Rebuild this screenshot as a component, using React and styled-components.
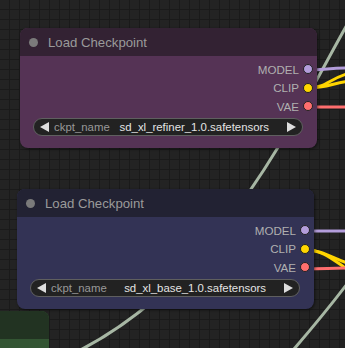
import React from 'react';
import styled, { createGlobalStyle } from 'styled-components';

const GlobalStyle = createGlobalStyle`
  html, body {
    margin: 0;
    padding: 0;
    background: #222;
  }
  body {
    font-family: "Liberation Sans", Arial, sans-serif;
  }
`;

const colors = {
  purple: { title: '#332233', body: '#553355' },
  blue: { title: '#222233', body: '#333355' },
  green: { title: '#223322', body: '#335533' },
};

const slotColors = {
  MODEL: '#b39ddb',
  CLIP: '#ffd500',
  VAE: '#ff6e6e',
};

const Canvas = styled.div`
  position: relative;
  width: 345px;
  height: 348px;
  overflow: hidden;
  background-color: #232323;
  background-image:
    linear-gradient(to right, #1a1a1a 1px, transparent 1px),
    linear-gradient(to bottom, #1a1a1a 1px, transparent 1px);
  background-size: 10px 10px;
  background-position: 9px 9px;
`;

const Links = styled.svg`
  position: absolute;
  inset: 0;
  width: 345px;
  height: 348px;
`;

const Node = styled.div`
  position: absolute;
  left: ${p => p.$x}px;
  top: ${p => p.$y}px;
  width: ${p => p.$w}px;
  height: ${p => p.$h}px;
  display: flex;
  flex-direction: column;
  background: ${p => colors[p.$color].body};
  border-radius: 8px;
  overflow: hidden;
  box-shadow: 1px 1px 3px rgba(0, 0, 0, 0.5);
`;

const TitleBar = styled.div`
  height: 28px;
  flex: none;
  display: flex;
  align-items: center;
  gap: 10px;
  padding-left: 9px;
  background: ${p => colors[p.$color].title};
  color: #9a9a9a;
  font-size: 13.2px;
`;

const TitleDot = styled.span`
  width: 9px;
  height: 9px;
  border-radius: 50%;
  background: #7a7a7a;
`;

const Outputs = styled.div`
  display: flex;
  flex-direction: column;
  padding-top: 4px;
`;

const OutputRow = styled.div`
  height: 18.5px;
  display: flex;
  align-items: center;
  justify-content: flex-end;
  gap: 4px;
  padding-right: 4px;
  color: #b0b0b0;
  font-size: 11.6px;
`;

const SlotDot = styled.span`
  width: 10px;
  height: 10px;
  box-sizing: border-box;
  border-radius: 50%;
  background: ${p => p.$color};
  border: 1.5px solid #222;
`;

const Combo = styled.div`
  margin: 2px 14px 0 13px;
  height: 18.5px;
  box-sizing: border-box;
  display: flex;
  align-items: center;
  padding: 0 6px;
  gap: 4px;
  background: #222;
  border: 1px solid #5f5f5f;
  border-radius: 10px;
  font-size: 11.4px;
`;

const ComboLabel = styled.span`
  color: #999;
  margin-left: 1px;
`;

const ComboValue = styled.span`
  flex: 1;
  text-align: right;
  color: #e4e4e4;
  padding-right: 14px;
  white-space: nowrap;
`;

const Arrow = ({ dir }) => (
  <svg width="9" height="10" viewBox="0 0 9 10">
    {dir === 'left' ? (
      <polygon points="9,0 9,10 0,5" fill="#ddd" />
    ) : (
      <polygon points="0,0 0,10 9,5" fill="#ddd" />
    )}
  </svg>
);

function CheckpointNode({ x, y, color, file }) {
  return (
    <Node $x={x} $y={y} $w={297} $h={120} $color={color}>
      <TitleBar $color={color}>
        <TitleDot />
        Load Checkpoint
      </TitleBar>
      <Outputs>
        {['MODEL', 'CLIP', 'VAE'].map(name => (
          <OutputRow key={name}>
            {name}
            <SlotDot $color={slotColors[name]} />
          </OutputRow>
        ))}
      </Outputs>
      <Combo>
        <Arrow dir="left" />
        <ComboLabel>ckpt_name</ComboLabel>
        <ComboValue>{file}</ComboValue>
        <Arrow dir="right" />
      </Combo>
    </Node>
  );
}

const GreenNode = styled(Node)`
  box-shadow: none;
`;

export default function App() {
  return (
    <>
      <GlobalStyle />
      <Canvas>
        <Links viewBox="0 0 345 348">
          <g fill="none" strokeWidth="3" strokeLinecap="round">
            <path d="M352 16 C 292 120, 215 300, 45 366" stroke="#a7b7a4" />
            <path d="M350 280 Q 326 312, 288 356" stroke="#a7b7a4" />
            <path d="M308 70 C 325 70, 330 68, 350 68" stroke={slotColors.MODEL} />
            <path d="M308 88 C 326 88, 330 78, 350 73" stroke={slotColors.CLIP} />
            <path d="M308 88 C 326 88, 334 83, 350 81" stroke={slotColors.CLIP} />
            <path d="M308 107 L 350 107" stroke={slotColors.VAE} />
            <path d="M306 231 L 350 231" stroke={slotColors.MODEL} />
            <path d="M306 250 C 322 250, 330 257, 350 264" stroke={slotColors.CLIP} />
            <path d="M306 250 C 324 250, 334 261, 350 271" stroke={slotColors.CLIP} />
            <path d="M306 269 C 325 269, 330 268, 350 268" stroke={slotColors.VAE} />
          </g>
        </Links>
        <CheckpointNode x={20} y={28} color="purple" file="sd_xl_refiner_1.0.safetensors" />
        <CheckpointNode x={17} y={189} color="blue" file="sd_xl_base_1.0.safetensors" />
        <GreenNode $x={-20} $y={311} $w={69} $h={60} $color="green">
          <TitleBar $color="green" />
        </GreenNode>
      </Canvas>
    </>
  );
}
